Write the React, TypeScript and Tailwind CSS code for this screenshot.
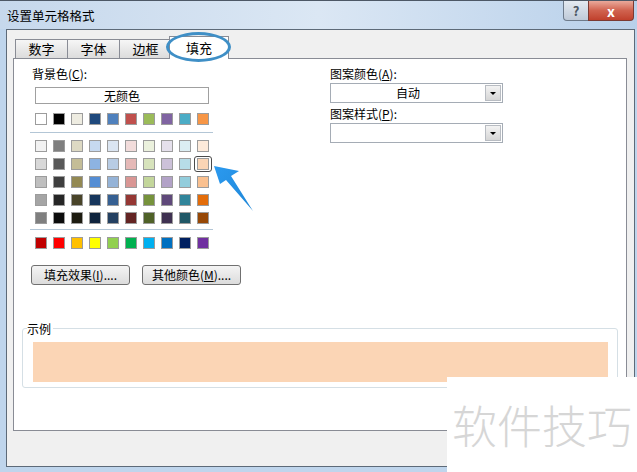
import React from "react";

const theme = ["#FFFFFF", "#000000", "#EEECE1", "#1F497D", "#4F81BD", "#C0504D", "#9BBB59", "#8064A2", "#4BACC6", "#F79646"];

const tints = [
  ["#F2F2F2", "#7F7F7F", "#DDD9C3", "#C6D9F0", "#DBE5F1", "#F2DCDB", "#EBF1DD", "#E5E0EC", "#DBEEF3", "#FDEADA"],
  ["#D8D8D8", "#595959", "#C4BD97", "#8DB3E2", "#B8CCE4", "#E5B9B7", "#D7E3BC", "#CCC1D9", "#B7DDE8", "#FBD5B5"],
  ["#BFBFBF", "#3F3F3F", "#938953", "#548DD4", "#95B3D7", "#D99694", "#C3D69B", "#B2A2C7", "#92CDDC", "#FAC08F"],
  ["#A5A5A5", "#262626", "#494429", "#17365D", "#366092", "#953734", "#76923C", "#5F497A", "#31859B", "#E36C09"],
  ["#7F7F7F", "#0C0C0C", "#1D1B10", "#0F243E", "#244061", "#632423", "#4F6128", "#3F3151", "#205867", "#974806"],
];

const standard = ["#C00000", "#FF0000", "#FFC000", "#FFFF00", "#92D050", "#00B050", "#00B0F0", "#0070C0", "#002060", "#7030A0"];

function Swatch({ color, selected }: { color: string; selected?: boolean }) {
  return (
    <span className="relative block w-[12px] h-[12px] border border-[#9c9c9c]" style={{ backgroundColor: color }}>
      {selected && <span className="absolute -left-[4px] -top-[3px] w-[18px] h-[16px] rounded-[3px] border-[1.5px] border-[#4a4a4a]" />}
    </span>
  );
}

function SwatchRow({ colors, selectedIndex }: { colors: string[]; selectedIndex?: number }) {
  return (
    <div className="flex gap-[6px] ml-[5px]">
      {colors.map((c, i) => (
        <Swatch key={c + i} color={c} selected={i === selectedIndex} />
      ))}
    </div>
  );
}

function Dropdown({ value }: { value: string }) {
  return (
    <div className="flex w-[173px] h-[20px] border border-[#a5acb5] bg-white">
      <div className="flex-1 flex items-center justify-center leading-[14px]">{value}</div>
      <div className="w-[16px] h-[16px] mt-[1px] mr-[1px] flex items-center justify-center border border-[#b8bcc2] bg-gradient-to-b from-[#f3f3f3] to-[#d6d6d6]">
        <span className="block w-0 h-0 border-l-[3px] border-r-[3px] border-t-[3px] border-l-transparent border-r-transparent border-t-black" />
      </div>
    </div>
  );
}

function Tab({ label }: { label: string }) {
  return (
    <div className="w-[53px] h-[19px] -ml-px first:ml-0 flex items-center justify-center border border-b-0 border-[#898c95] bg-gradient-to-b from-[#f6f6f6] to-[#dcdcdc] text-[13px] leading-[14px]">
      {label}
    </div>
  );
}

export default function App() {
  return (
    <div
      className="relative w-[637px] h-[472px] overflow-hidden flex flex-col bg-[#bfd5ec] text-[12px] text-black"
      style={{ fontFamily: '"Noto Sans CJK SC", "Noto Sans", sans-serif' }}
    >
      {/* Title bar */}
      <div className="h-[29px] shrink-0 flex justify-between items-start border-t border-[#4d5866] bg-gradient-to-r from-[#c6d8ec] via-[#dbe7f4] to-[#b8d0ea]">
        <span className="mt-[8px] ml-[7px] text-[12.5px] leading-[14px]">设置单元格格式</span>
        <div className="flex mr-[3px]">
          <div className="w-[26px] h-[20px] flex items-center justify-center rounded-bl-[4px] border border-t-0 border-[#6e7b8b] bg-gradient-to-b from-[#e4eaf1] to-[#bfcad8] text-[13px] font-bold text-[#4b5663] leading-none">
            ?
          </div>
          <div className="w-[46px] h-[20px] -ml-px flex items-center justify-center rounded-br-[4px] border border-t-0 border-[#7b3a33] bg-gradient-to-b from-[#e9a99b] via-[#d0624f] to-[#c0402c] text-[14px] font-bold text-white leading-none">
            x
          </div>
        </div>
      </div>

      {/* Client area */}
      <div className="h-[443px] shrink-0 flex pl-[6px] pr-[2px] pb-[5px]">
        <div className="w-[629px] h-[438px] flex flex-col border border-[#5d6a78] bg-[#f0f0f0] pt-[5px] pl-[6px]">
          {/* Tabs */}
          <div className="flex items-end h-[23px] shrink-0 pl-[2px] relative z-10">
            <Tab label="数字" />
            <Tab label="字体" />
            <Tab label="边框" />
            <div className="w-[60px] h-[23px] -ml-[3px] flex items-center justify-center border border-b-0 border-[#898c95] bg-white text-[13px] leading-[14px] -mb-px">
              填充
            </div>
          </div>

          {/* Panel */}
          <div className="w-[614px] h-[373px] shrink-0 border border-[#898c95] bg-white flex flex-col">
            <div className="flex">
              {/* Left column */}
              <div className="w-[316px] pl-[16px] pt-[8px] flex flex-col">
                <div className="h-[14px] leading-[14px] pl-[2px]">
                  背景色(<u>C</u>):
                </div>
                <div className="mt-[6px] ml-[5px] w-[174px] h-[17px] border border-[#a0a0a0] flex items-center justify-center leading-[14px]">
                  无颜色
                </div>
                <div className="mt-[9px]">
                  <SwatchRow colors={theme} />
                </div>
                <div className="mt-[7px] w-[183px] h-px bg-[#b3c6d6]" />
                <div className="mt-[7px] flex flex-col gap-[6px]">
                  {tints.map((row, i) => (
                    <SwatchRow key={i} colors={row} selectedIndex={i === 1 ? 9 : undefined} />
                  ))}
                </div>
                <div className="mt-[5px] w-[183px] h-px bg-[#b3c6d6]" />
                <div className="mt-[7px]">
                  <SwatchRow colors={standard} />
                </div>
                <div className="mt-[16px] ml-[1px] flex gap-[12px]">
                  <button className="w-[99px] h-[20px] rounded-[3px] border border-[#707070] bg-gradient-to-b from-[#f4f4f4] to-[#dcdcdc] leading-[14px]">
                    填充效果(<u>I</u>)....
                  </button>
                  <button className="w-[99px] h-[20px] rounded-[3px] border border-[#707070] bg-gradient-to-b from-[#f4f4f4] to-[#dcdcdc] leading-[14px]">
                    其他颜色(<u>M</u>)....
                  </button>
                </div>
              </div>

              {/* Right column */}
              <div className="pt-[8px] flex flex-col">
                <div className="h-[14px] leading-[14px]">
                  图案颜色(<u>A</u>):
                </div>
                <div className="mt-[2px]">
                  <Dropdown value="自动" />
                </div>
                <div className="mt-[4px] h-[14px] leading-[14px]">
                  图案样式(<u>P</u>):
                </div>
                <div className="mt-[2px]">
                  <Dropdown value="" />
                </div>
              </div>
            </div>

            {/* Sample */}
            <div className="relative mt-[43px] ml-[8px] w-[596px] h-[60px] rounded-[3px] border border-[#d5dfe5] pt-[13px] pl-[10px]">
              <span className="absolute left-[4px] -top-[7px] bg-white pr-[2px] leading-[14px]">示例</span>
              <div className="w-[575px] h-[40px] bg-[#FBD5B5]" />
            </div>
          </div>
        </div>
      </div>

      {/* Annotation: ellipse around the 填充 tab */}
      <div className="absolute z-20 left-[166px] top-[32px] w-[65px] h-[30px] rounded-[50%] border-[3px] border-[#3f8fc6]" />

      {/* Annotation: arrow */}
      <svg className="absolute z-20 left-0 top-0" width="637" height="472" viewBox="0 0 637 472">
        <defs>
          <linearGradient id="arr" x1="0" y1="0" x2="1" y2="1">
            <stop offset="0" stopColor="#2b9af0" />
            <stop offset="1" stopColor="#1f86d6" />
          </linearGradient>
        </defs>
        <polygon points="214,166 239,171 231,176 253,211 226,180 220,184" fill="url(#arr)" />
      </svg>

      {/* Watermark */}
      <div className="absolute z-20 right-0 bottom-0 w-[190px] h-[95px] bg-white flex items-center justify-center">
        <span className="text-[45px] leading-none font-light text-[#d6d6d6]">软件技巧</span>
      </div>
    </div>
  );
}
